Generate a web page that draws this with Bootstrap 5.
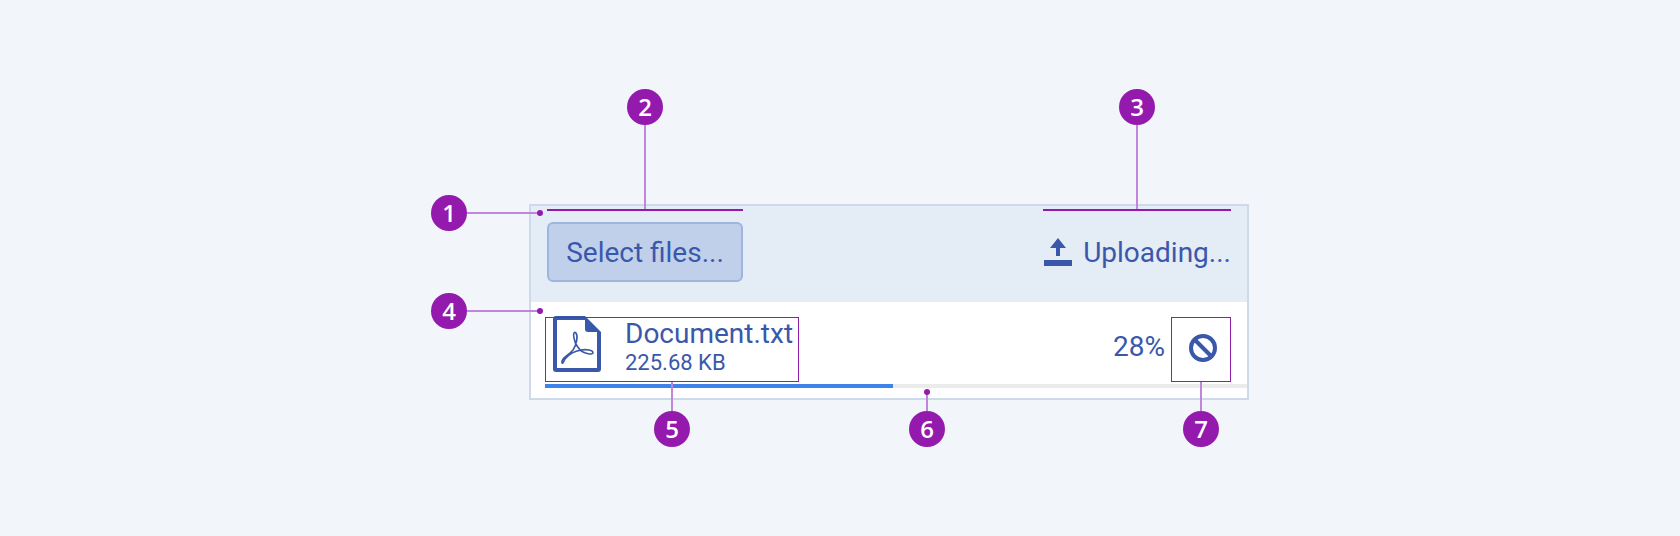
<!DOCTYPE html>
<html lang="en">
<head>
<meta charset="utf-8">
<title>Upload anatomy</title>
<link rel="stylesheet" href="https://cdn.jsdelivr.net/npm/bootstrap@5.3.0/dist/css/bootstrap.min.css">
<style>
html,body{height:536px;overflow:hidden}
body{background:#f2f5fa;font-family:Roboto,"Liberation Sans",sans-serif;font-weight:400;color:#3a58ab}
.stage{position:relative;width:1680px;height:536px;padding:204px 0 0 529px}
.uploader{width:720px;height:196px;border:2px solid #cfd9ec;background:#fff}
.up-head{height:96px;background:#e4ecf6;padding:0 16px 4px}
.pick-btn{width:196px;height:60px;padding:2px 0 0;font-size:28px;line-height:1;color:#3a58ab;background:#c0d0ea;border:2px solid #9fb4de;border-radius:6px;font-weight:400}
.up-status{font-size:28px;line-height:1;gap:11px}
.up-status span{padding-top:2px}
.up-row{height:82px;padding:15px 16px 0 14px}
.file-info{width:254px;height:65px;padding-left:8px;gap:24px}
.file-icon{margin-top:-1px;flex:none}
.file-name{font-size:28px;line-height:32px;margin-top:1px}
.file-size{font-size:22px;line-height:26px;margin-top:0}
.up-pct{font-size:28px;line-height:1;margin-right:6px;margin-top:-7px}
.cancel-slot{width:60px;height:65px;padding:0 0 5px 4px}
.up-bar{height:4px;margin:0 0 0 14px;background:#ebebeb;border-radius:0}
.up-bar .progress-bar{background:#3f83ea}
.marks{position:absolute;inset:0;pointer-events:none}
.num{position:absolute;width:36px;height:36px;border-radius:50%;background:#9419ad;color:#fff;font:550 24px/35px "Open Sans",sans-serif;text-align:center}
.n1{left:431px;top:195px}.n2{left:627px;top:89px}.n3{left:1119px;top:89px}
.n4{left:431px;top:293px}.n5{left:654px;top:411px}.n6{left:909px;top:411px}.n7{left:1183px;top:411px}
.ln{position:absolute;background:#c285dc}
.l1{left:467px;top:212px;width:71px;height:2px}
.l2{left:644px;top:125px;width:2px;height:84px}
.l3{left:1136px;top:125px;width:2px;height:84px}
.l4{left:467px;top:310px;width:71px;height:2px}
.l5{left:671px;top:382px;width:2px;height:29px}
.l6{left:926px;top:392px;width:2px;height:19px}
.l7{left:1200px;top:382px;width:2px;height:29px}
.dot{position:absolute;width:6px;height:6px;border-radius:50%;background:#9419ad}
.d1{left:537px;top:210px}.d4{left:537px;top:308px}.d6{left:924px;top:389px}
.bar{position:absolute;height:2px;background:#9419ad;top:209px}
.b2{left:547px;width:196px}.b3{left:1043px;width:188px}
.box{position:absolute;top:317px;height:65px;border:1px solid #8f1fa8}
.bx5{left:545px;width:254px}.bx7{left:1171px;width:60px}
</style>
</head>
<body>
<div class="stage">
  <div class="uploader">
    <div class="up-head d-flex align-items-center justify-content-between">
      <button type="button" class="btn pick-btn">Select files...</button>
      <div class="up-status d-flex align-items-center">
        <svg width="28" height="28" viewBox="0 0 28 28" fill="#3a58ab" aria-hidden="true"><path d="M14 0 22 10H16V18H12V10H6Z"/><rect x="0" y="22" width="28" height="6"/></svg>
        <span>Uploading...</span>
      </div>
    </div>
    <div class="up-row d-flex justify-content-between">
      <div class="file-info d-flex">
        <svg class="file-icon" width="48" height="56" viewBox="0 0 48 56" aria-hidden="true">
          <path fill="#3a58ab" fill-rule="evenodd" d="M3 0H32L48 16V53a3 3 0 0 1-3 3H3a3 3 0 0 1-3-3V3a3 3 0 0 1 3-3ZM4 4V52H44V16H35a3 3 0 0 1-3-3V4Z"/>
          <path fill="none" stroke="#3a58ab" stroke-width="1.6" d="M9 47C8 42 15 40 20 34C24 28 25 20 23 17C21 15 20 18 21 22C22 28 26 34 30 36C34 38 40 39 40 36.5C40 34 33 33 28 34C22 35 16 38 12 43C11 45 10 48 9 47Z"/>
        </svg>
        <div>
          <div class="file-name">Document.txt</div>
          <div class="file-size">225.68 KB</div>
        </div>
      </div>
      <div class="d-flex align-items-center">
        <span class="up-pct">28%</span>
        <div class="cancel-slot d-flex align-items-center justify-content-center">
          <svg width="28" height="28" viewBox="0 0 28 28" fill="none" stroke="#3a58ab" stroke-width="4" aria-hidden="true"><circle cx="14" cy="14" r="12"/><path d="M5.5 5.5 22.5 22.5"/></svg>
        </div>
      </div>
    </div>
    <div class="progress up-bar"><div class="progress-bar" style="width:49.6%"></div></div>
  </div>
  <div class="marks">
    <div class="ln l1"></div><div class="ln l2"></div><div class="ln l3"></div><div class="ln l4"></div><div class="ln l5"></div><div class="ln l6"></div><div class="ln l7"></div>
    <div class="dot d1"></div><div class="dot d4"></div><div class="dot d6"></div>
    <div class="bar b2"></div><div class="bar b3"></div>
    <div class="box bx5"></div><div class="box bx7"></div>
    <div class="num n1">1</div><div class="num n2">2</div><div class="num n3">3</div><div class="num n4">4</div><div class="num n5">5</div><div class="num n6">6</div><div class="num n7">7</div>
  </div>
</div>
</body>
</html>
